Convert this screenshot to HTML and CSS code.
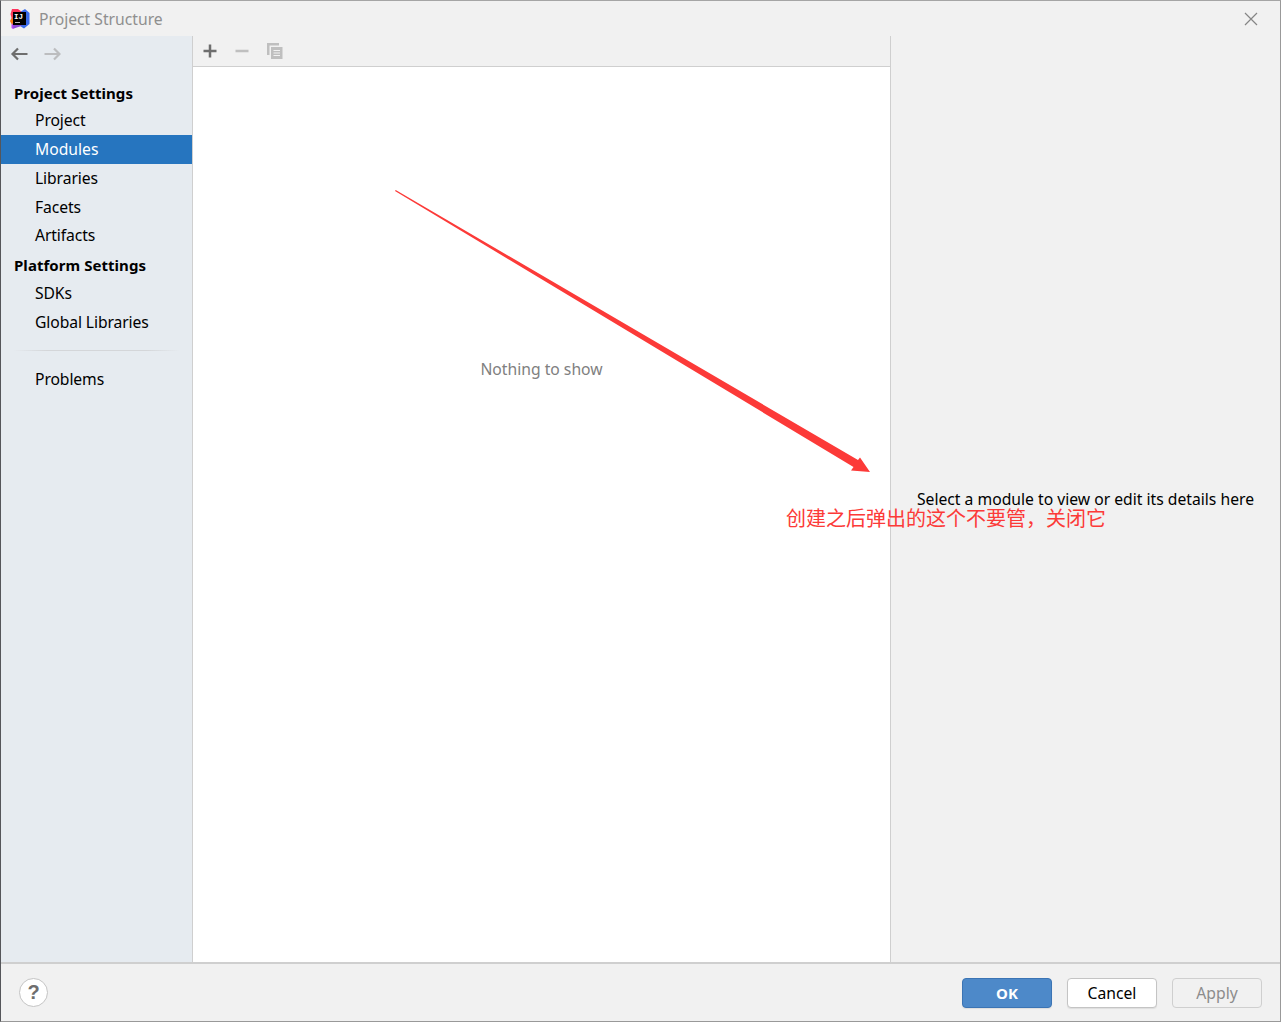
FILE: index.html
```html
<!DOCTYPE html>
<html lang="en">
<head>
  <meta charset="utf-8">
  <title>Project Structure</title>
  <link rel="stylesheet" href="styles.css">
</head>
<body>

<div class="window">
  <div class="titlebar">
    <svg class="logo" width="22" height="22" viewBox="0 0 22 22">
      <defs>
        <linearGradient id="warm" x1="0" y1="0" x2="0" y2="1">
          <stop offset="0" stop-color="#fe315d"/>
          <stop offset="0.4" stop-color="#fe4155"/>
          <stop offset="0.55" stop-color="#f97a12"/>
          <stop offset="0.7" stop-color="#f97a12"/>
          <stop offset="0.8" stop-color="#b74af7"/>
        </linearGradient>
      </defs>
      <path d="M3 1h6l4 3v12l-9 5-1.500-1 0-4-1.500-3 1.500-3-1-4z" fill="url(#warm)"/>
      <path d="M12 3.500l4-2.500 4.500 4v11l-5.500 4.500-4-2.500z" fill="#3b6cea"/>
      <path d="M4 16h10l-3 2.500-6.500 2z" fill="#8c4bd8"/>
      <rect x="4" y="4" width="13" height="13" fill="#000"/>
      <text class="logo-text" x="5" y="10.500">IJ</text>
      <rect x="6" y="14" width="5" height="1" fill="#bbb"/>
    </svg>
    <span class="title">Project Structure</span>
    <svg class="close" width="14" height="14" viewBox="0 0 14 14">
      <path d="M1 1l12 12M13 1L1 13" stroke="#858585" stroke-width="1.2"/>
    </svg>
  </div>

  <div class="main">
    <div class="sidebar">
      <div class="history">
        <svg width="18" height="14" viewBox="0 0 18 14" fill="none" stroke="#6e6e6e" stroke-width="2.200">
          <path d="M17.500 7H2.500M8 1.500L2.500 7 8 12.500"/>
        </svg>
        <svg width="18" height="14" viewBox="0 0 18 14" fill="none" stroke="#bcbdbf" stroke-width="2.200">
          <path d="M1.500 7h15M11 1.500L16.500 7 11 12.500"/>
        </svg>
      </div>
      <div class="group group-first">Project Settings</div>
      <div class="item">Project</div>
      <div class="item active">Modules</div>
      <div class="item">Libraries</div>
      <div class="item">Facets</div>
      <div class="item item-last">Artifacts</div>
      <div class="group">Platform Settings</div>
      <div class="item">SDKs</div>
      <div class="item">Global Libraries</div>
      <div class="separator"></div>
      <div class="item">Problems</div>
    </div>

    <div class="modules">
      <div class="toolbar">
        <svg width="14" height="14" viewBox="0 0 14 14">
          <path d="M7 0.500v13M0.500 7h13" stroke="#6e6e6e" stroke-width="2.500"/>
        </svg>
        <svg width="14" height="14" viewBox="0 0 14 14">
          <path d="M0.500 7h13" stroke="#bfbfbf" stroke-width="2.500"/>
        </svg>
        <svg width="16" height="16" viewBox="0 0 16 16">
          <path d="M0 0h12v2.500H2.500V12H0z" fill="#bfbfbf"/>
          <path d="M4 4h11.500v12H4z" fill="#bfbfbf"/>
          <path d="M6.500 7.500h6.500M6.500 10h6.500M6.500 12.500h6.500" stroke="#f2f2f2"/>
        </svg>
      </div>
      <div class="empty"><span>Nothing to show</span></div>
    </div>

    <div class="details"><span>Select a module to view or edit its details here</span></div>
  </div>

  <div class="footer">
    <button class="help">?</button>
    <button class="btn primary">OK</button>
    <button class="btn">Cancel</button>
    <button class="btn disabled">Apply</button>
  </div>

  <svg class="arrow" width="476" height="284" viewBox="0 0 476 284">
    <path d="M0 1L0.700 0L463 270L465 267.500L475 282L456 280.500L458.500 277Z" fill="#fc3a38"/>
  </svg>
  <div class="note">创建之后弹出的这个不要管，关闭它</div>
</div>

</body>
</html>
```
FILE: styles.css
```css
* { box-sizing: border-box; }
body { margin: 0; font: 15.7px/20px "Noto Sans", "Noto Sans CJK SC", sans-serif; color: #000; }
button { font: inherit; padding: 0; }
svg { display: block; flex: none; }

.window { position: relative; display: flex; flex-direction: column; width: 1281px; height: 1022px; background: #f1f1f1; border: 1px solid #999; border-left-color: #55565a; border-top-color: #a5a5a5; white-space: nowrap; overflow: hidden; }

.titlebar { display: flex; align-items: center; height: 35px; padding: 0 22px 0 8px; color: #8f8f8f; }
.title { margin-left: 8px; }
.logo-text { font: bold 7.5px "Liberation Mono", monospace; fill: #fff; }
.close { margin-left: auto; }

.main { display: flex; flex: 1; min-height: 0; }

.sidebar { width: 192px; background: #e6ebf0; border-right: 1px solid #cfcfcf; }
.history { display: flex; gap: 15px; padding: 11px 0 0 9px; }
.group { height: 29px; padding-left: 13px; line-height: 30px; font-weight: 700; font-size: 15px; letter-spacing: 0.05px; }
.group-first { height: 27px; margin-top: 18px; line-height: 28px; }
.item { height: 29px; padding-left: 34px; line-height: 29px; letter-spacing: -0.1px; }
.item-last { height: 28px; line-height: 27px; }
.active { background: #2675bf; color: #fff; letter-spacing: 0; }
.separator { height: 1px; margin: 13px 12px 14px; background: linear-gradient(to right, transparent, #d4d6d9 20%, #d4d6d9 80%, transparent); }

.modules { display: flex; flex-direction: column; width: 698px; background: #fff; border-right: 1px solid #cfcfcf; }
.toolbar { display: flex; align-items: center; gap: 18px; height: 31px; padding: 0 10px; background: #f1f1f1; border-bottom: 1px solid #cfcfcf; }
.empty { flex: 1; padding-top: 292px; text-align: center; color: #808080; }

.details { display: flex; flex: 1; align-items: center; justify-content: center; }

.footer { display: flex; align-items: center; height: 59px; padding: 0 18px; border-top: 2px solid #cfcfcf; }
.help { width: 29px; height: 29px; margin-right: auto; border: 1px solid #c4c4c4; border-radius: 50%; background: #fff; color: #6e6e6e; font: bold 20px/27px "Liberation Sans", sans-serif; }
.btn { width: 90px; height: 30px; margin-left: 15px; border: 1px solid #c4c4c4; border-radius: 4px; background: #fff; color: #000; box-shadow: 0 1px 1px #ddd; }
.primary { background: #4d89c9; border-color: #3b74b4; color: #fff; font-weight: 700; font-size: 15px; }
.disabled { background: #f1f1f1; border-color: #cfcfcf; color: #8c8c8c; box-shadow: none; }

/* annotations on top of the dialog */
.arrow { position: absolute; left: 394px; top: 189px; height: 284px; }
.note { position: absolute; left: 785px; top: 502px; font: 20px/30px "Noto Sans CJK SC", sans-serif; color: #fc3a38; }
```
